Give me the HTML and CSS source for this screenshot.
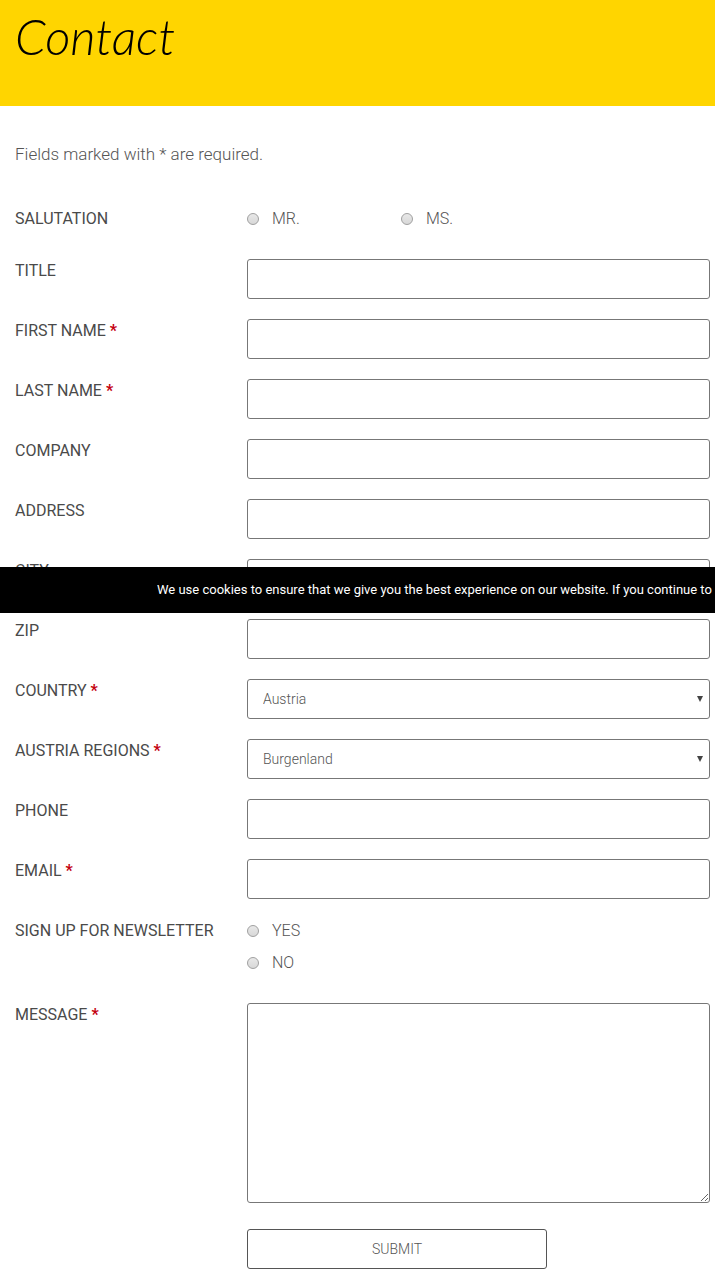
FILE: index.html
```html
<!DOCTYPE html>
<html lang="en">
<head>
    <meta charset="UTF-8">
    <meta name="viewport" content="width=device-width, initial-scale=1.0">
    <title>Contact</title>
    <link rel="stylesheet" href="styles.css">
</head>
<body>
    <header class="page-header">
        <h1>Contact</h1>
    </header>

    <form class="contact-form">
        <p class="intro">Fields marked with * are required.</p>

        <div class="form-row" role="radiogroup" aria-labelledby="salutation-label">
            <span class="form-label" id="salutation-label">SALUTATION</span>
            <div class="radio-inline">
                <label class="radio"><input type="radio" name="salutation" value="mr">MR.</label>
                <label class="radio"><input type="radio" name="salutation" value="ms">MS.</label>
            </div>
        </div>
        <div class="form-row">
            <label class="form-label" for="title">TITLE</label>
            <input class="form-control" type="text" id="title" name="title">
        </div>
        <div class="form-row">
            <label class="form-label" for="first-name">FIRST NAME <span class="required">*</span></label>
            <input class="form-control" type="text" id="first-name" name="first-name">
        </div>
        <div class="form-row">
            <label class="form-label" for="last-name">LAST NAME <span class="required">*</span></label>
            <input class="form-control" type="text" id="last-name" name="last-name">
        </div>
        <div class="form-row">
            <label class="form-label" for="company">COMPANY</label>
            <input class="form-control" type="text" id="company" name="company">
        </div>
        <div class="form-row">
            <label class="form-label" for="address">ADDRESS</label>
            <input class="form-control" type="text" id="address" name="address">
        </div>
        <div class="form-row">
            <label class="form-label" for="city">CITY</label>
            <input class="form-control" type="text" id="city" name="city">
        </div>
        <div class="form-row">
            <label class="form-label" for="zip">ZIP</label>
            <input class="form-control" type="text" id="zip" name="zip">
        </div>
        <div class="form-row">
            <label class="form-label" for="country">COUNTRY <span class="required">*</span></label>
            <div class="select-wrap">
                <select class="form-control" id="country" name="country">
                    <option>Austria</option>
                </select>
                <svg class="arrow" viewBox="0 0 6 6" aria-hidden="true"><path d="M0 0h6L3 6z"/></svg>
            </div>
        </div>
        <div class="form-row">
            <label class="form-label" for="region">AUSTRIA REGIONS <span class="required">*</span></label>
            <div class="select-wrap">
                <select class="form-control" id="region" name="region">
                    <option>Burgenland</option>
                </select>
                <svg class="arrow" viewBox="0 0 6 6" aria-hidden="true"><path d="M0 0h6L3 6z"/></svg>
            </div>
        </div>
        <div class="form-row">
            <label class="form-label" for="phone">PHONE</label>
            <input class="form-control" type="tel" id="phone" name="phone">
        </div>
        <div class="form-row">
            <label class="form-label" for="email">EMAIL <span class="required">*</span></label>
            <input class="form-control" type="email" id="email" name="email">
        </div>
        <div class="form-row" role="radiogroup" aria-labelledby="newsletter-label">
            <span class="form-label" id="newsletter-label">SIGN UP FOR NEWSLETTER</span>
            <div>
                <label class="radio"><input type="radio" name="newsletter" value="yes">YES</label>
                <label class="radio"><input type="radio" name="newsletter" value="no">NO</label>
            </div>
        </div>
        <div class="form-row">
            <label class="form-label" for="message">MESSAGE <span class="required">*</span></label>
            <textarea class="form-control message" id="message" name="message"></textarea>
        </div>
        <div class="form-row submit-row">
            <button class="submit" type="submit">SUBMIT</button>
        </div>
    </form>

    <div class="cookie-bar">We use cookies to ensure that we give you the best experience on our website. If you continue to</div>
</body>
</html>
```
FILE: styles.css
```css
* {
    box-sizing: border-box;
}

body {
    margin: 0;
    background-color: #fff;
    color: #555;
    font-family: Roboto, "Liberation Sans", sans-serif;
    font-size: 16px;
    font-weight: 300;
    line-height: 24px;
}

.page-header {
    background-color: #ffd500;
    height: 106px;
    padding: 8px 15px;
}

h1 {
    margin: 0;
    color: #000;
    font-family: Lato, cursive;
    font-size: 49px;
    font-style: italic;
    font-weight: 300;
    line-height: 56px;
}

.contact-form {
    padding: 36px 5px 2px 15px;
}

.intro {
    margin: 0 0 41px;
    font-size: 17px;
}

.form-row {
    display: grid;
    grid-template-columns: 232px 1fr;
    align-items: start;
    margin-bottom: 20px;
}

.form-label {
    color: #4a4a4a;
    font-weight: 400;
}

.required {
    color: #c4000f;
    font-weight: 700;
}

.form-control {
    display: block;
    width: 100%;
    height: 40px;
    margin: 0;
    padding: 0 15px;
    border: 1px solid #777;
    border-radius: 3px;
    background-color: #fff;
    color: #555;
    font: inherit;
    font-size: 14px;
}

.select-wrap {
    position: relative;
}

.select-wrap select {
    appearance: none;
}

/* sits on top of the select */
.arrow {
    position: absolute;
    top: 17px;
    right: 7px;
    width: 6px;
    height: 6px;
    fill: #444;
}

.message {
    height: 200px;
    resize: vertical;
}

.radio-inline {
    display: grid;
    grid-template-columns: 154px 154px;
}

.radio {
    display: flex;
    align-items: center;
    gap: 13px;
    margin-bottom: 8px;
}

.radio input {
    appearance: none;
    width: 12px;
    height: 12px;
    margin: 0;
    border: 1px solid #a0a0a0;
    border-radius: 50%;
    background: linear-gradient(#e8e8e8, #d8d8d8);
}

.radio input:checked {
    background: radial-gradient(#444 35%, #e0e0e0 40%);
}

.submit-row {
    margin: 26px 0 0;
}

.submit {
    grid-column: 2;
    width: 300px;
    height: 40px;
    border: 1px solid #555;
    border-radius: 3px;
    background-color: #fff;
    color: #555;
    font: inherit;
    font-size: 14px;
}

.cookie-bar {
    position: fixed;
    top: 567px;
    left: 0;
    right: 0;
    padding: 11px 0 11px 157px;
    overflow: hidden;
    background-color: #000;
    color: #fff;
    font-size: 13px;
    font-weight: 400;
    white-space: nowrap;
}
```
